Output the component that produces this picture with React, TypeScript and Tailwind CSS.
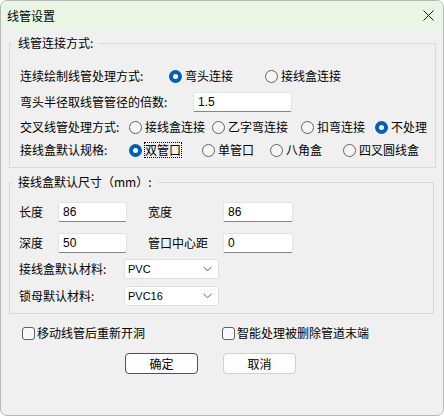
import React from 'react';

const font = { fontFamily: '"Noto Sans CJK SC", "Microsoft YaHei", sans-serif' };

const Radio = ({ checked }: { checked?: boolean }) =>
  checked ? (
    <span className="w-[13px] h-[13px] shrink-0 rounded-full bg-[#005fb8] flex items-center justify-center">
      <span className="w-[5px] h-[5px] rounded-full bg-white" />
    </span>
  ) : (
    <span className="w-[13px] h-[13px] shrink-0 rounded-full border border-[#616161] bg-[#f6f6f6]" />
  );

const Option = ({
  label,
  checked,
  width,
  focus
}: {
  label: string;
  checked?: boolean;
  width: string;
  focus?: boolean;
}) => (
  <div className={`flex items-center gap-[3px] ${width}`}>
    <Radio checked={checked} />
    <span className={focus ? 'outline outline-1 outline-dotted outline-black leading-[14px]' : ''}>{label}</span>
  </div>
);

const TextBox = ({ value, width, height }: { value: string; width: string; height: string }) => (
  <div
    className={`${width} ${height} bg-white border border-[#e3e3e3] border-b-[#858585] rounded-[2px] flex items-center pl-[4px] text-[12px] text-black`}
    style={{ fontFamily: '"Liberation Sans", Arial, sans-serif' }}
  >
    {value}
  </div>
);

const Select = ({ value }: { value: string }) => (
  <div className="w-[95px] h-[20px] bg-white border border-[#e0e0e0] rounded-[2px] flex items-center justify-between pl-[3px] pr-[6px]">
    <span className="text-[11px]" style={{ fontFamily: '"Liberation Sans", Arial, sans-serif' }}>{value}</span>
    <svg width="9" height="6" viewBox="0 0 9 6">
      <polyline points="0.5,0.8 4.5,4.8 8.5,0.8" fill="none" stroke="#606060" strokeWidth="1" />
    </svg>
  </div>
);

const Checkbox = ({ label, width }: { label: string; width: string }) => (
  <div className={`flex items-center gap-[2px] ${width}`}>
    <span className="w-[13px] h-[13px] rounded-[3px] border border-[#5f5f5f] bg-[#f8f8f8]" />
    <span>{label}</span>
  </div>
);

export default function App() {
  return (
    <div
      className="w-[444px] h-[416px] bg-[#f0f0f0] text-[12px] leading-[16px] text-black overflow-hidden rounded-[7px] border border-[#b8b8b8] flex flex-col"
      style={font}
    >
      {/* Title bar */}
      <div className="h-[29px] shrink-0 bg-[#eaf6e4] flex items-center justify-between pl-[6px] pr-[9px]">
        <span className="text-[12px]">线管设置</span>
        <svg width="11" height="11" viewBox="0 0 11 11">
          <path d="M0.5 0.5 L10.5 10.5 M10.5 0.5 L0.5 10.5" stroke="#1a1a1a" strokeWidth="1" />
        </svg>
      </div>

      {/* Group 1 */}
      <fieldset className="mt-[5px] ml-[8px] w-[425px] border border-[#d9d9d9] p-0 m-0">
        <legend className="ml-[2px] px-[6px] leading-[16px]">线管连接方式:</legend>
        <div className="pl-[10px] pt-[15px] pb-[7px] flex flex-col">
          <div className="flex items-center h-[20px]">
            <span className="w-[149px]">连续绘制线管处理方式:</span>
            <Option label="弯头连接" checked width="w-[96px]" />
            <Option label="接线盒连接" width="w-[100px]" />
          </div>
          <div className="flex items-center h-[20px] mt-[6px]">
            <span className="w-[173px]">弯头半径取线管管径的倍数:</span>
            <TextBox value="1.5" width="w-[99px]" height="h-[20px]" />
          </div>
          <div className="flex items-center h-[20px] mt-[5px]">
            <span className="w-[109px]">交叉线管处理方式:</span>
            <Option label="接线盒连接" width="w-[83px]" />
            <Option label="乙字弯连接" width="w-[89px]" />
            <Option label="扣弯连接" width="w-[74px]" />
            <Option label="不处理" checked width="w-[60px]" />
          </div>
          <div className="flex items-center h-[20px] mt-[3px]">
            <span className="w-[109px]">接线盒默认规格:</span>
            <Option label="双管口" checked focus width="w-[73px]" />
            <Option label="单管口" width="w-[68px]" />
            <Option label="八角盒" width="w-[73px]" />
            <Option label="四叉圆线盒" width="w-[80px]" />
          </div>
        </div>
      </fieldset>

      {/* Group 2 */}
      <fieldset className="mt-[6px] ml-[8px] w-[425px] border border-[#d9d9d9] p-0 m-0">
        <legend className="ml-[2px] px-[6px] leading-[16px]">接线盒默认尺寸（mm）:</legend>
        <div className="pl-[9px] pt-[12px] pb-[7px] flex flex-col">
          <div className="flex items-center h-[20px]">
            <span className="w-[39px]">长度</span>
            <TextBox value="86" width="w-[69px]" height="h-[20px]" />
            <span className="w-[96px] pl-[21px]">宽度</span>
            <TextBox value="86" width="w-[70px]" height="h-[20px]" />
          </div>
          <div className="flex items-center h-[20px] mt-[11px]">
            <span className="w-[39px]">深度</span>
            <TextBox value="50" width="w-[69px]" height="h-[20px]" />
            <span className="w-[96px] pl-[21px]">管口中心距</span>
            <TextBox value="0" width="w-[70px]" height="h-[20px]" />
          </div>
          <div className="flex items-center h-[20px] mt-[6px]">
            <span className="w-[105px]">接线盒默认材料:</span>
            <Select value="PVC" />
          </div>
          <div className="flex items-center h-[20px] mt-[7px]">
            <span className="w-[105px]">锁母默认材料:</span>
            <Select value="PVC16" />
          </div>
        </div>
      </fieldset>

      {/* Options */}
      <div className="flex items-center h-[14px] mt-[12px] pl-[21px]">
        <Checkbox label="移动线管后重新开洞" width="w-[200px]" />
        <Checkbox label="智能处理被删除管道末端" width="w-[200px]" />
      </div>

      {/* Buttons */}
      <div className="flex items-center mt-[13px] pl-[124px] gap-[25px]">
        <button className="w-[73px] h-[21px] bg-[#fdfdfd] border border-[#0067c0] rounded-[4px] text-[12px] leading-[16px]">
          确定
        </button>
        <button className="w-[73px] h-[21px] bg-[#fdfdfd] border border-[#d0d0d0] rounded-[4px] text-[12px] leading-[16px]">
          取消
        </button>
      </div>
    </div>
  );
}
